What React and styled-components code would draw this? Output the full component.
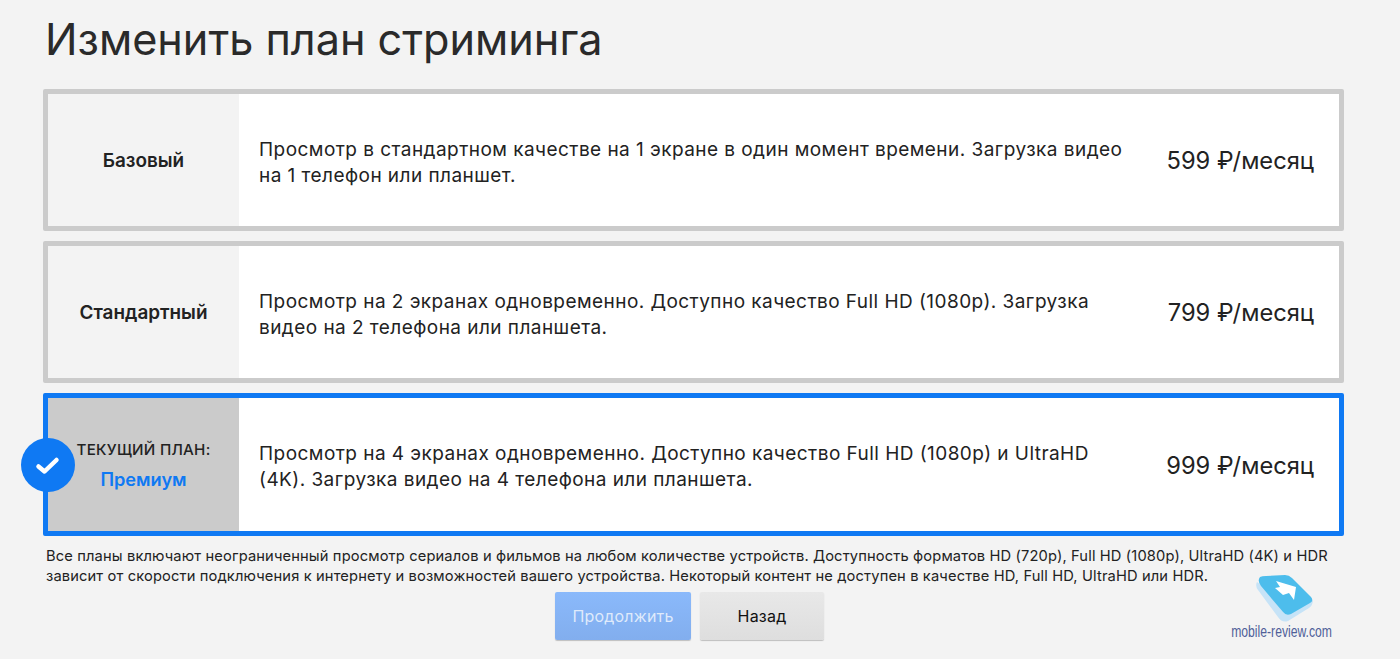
import React from "react";
import styled, { createGlobalStyle } from "styled-components";

const Global = createGlobalStyle`
  html, body { margin: 0; padding: 0; background: #f3f3f3; height: 100%; }
  body { font-family: "Inter", "Liberation Sans", sans-serif; color: #222; overflow: hidden; }
`;
const Page = styled.div`
  position: relative;
  width: 1400px;
  height: 659px;
  overflow: hidden;
  padding: 0 56px 0 43px;
  box-sizing: border-box;
`;
const Title = styled.h1`
  margin: 0;
  height: 89px;
  padding: 12px 0 0 2px;
  box-sizing: border-box;
  font-size: 43.2px;
  line-height: 54px;
  font-weight: 400;
  color: #2a2a2a;
`;
const Plans = styled.div`
  display: flex;
  flex-direction: column;
  gap: 10px;
`;
const Card = styled.div`
  position: relative;
  display: grid;
  grid-template-columns: 191px 1fr 182px;
  height: ${p => (p.$active ? 143 : 142)}px;
  box-sizing: border-box;
  border: 5px solid ${p => (p.$active ? "#0f79f3" : "#cbcbcb")};
  border-radius: 2px;
  background: #fff;
`;
const NameCell = styled.div`
  display: flex;
  flex-direction: column;
  align-items: center;
  justify-content: center;
  gap: 9px;
  padding-top: 1px;
  background: ${p => (p.$active ? "#cbcbcb" : "#f3f3f3")};
`;
const Name = styled.div`
  font-size: ${p => (p.$active ? 18.2 : 18.9)}px;
  font-weight: 600;
  color: ${p => (p.$active ? "#0f79f3" : "#222")};
`;
const Current = styled.div`
  font-size: 15.2px;
  font-weight: 500;
  color: #222;
  letter-spacing: 0.25px;
`;
const Desc = styled.div`
  align-self: center;
  padding: 5px 20px 0 20px;
  font-size: 19px;
  line-height: 26px;
  color: #222;
  letter-spacing: 0.45px;
`;
const Price = styled.div`
  align-self: center;
  justify-self: end;
  padding: 1px 25px 0 0;
  font-size: 23.7px;
  color: #222;
  white-space: nowrap;
`;
const Badge = styled.div`
  position: absolute;
  left: -27px;
  top: 40px;
  width: 54px;
  height: 54px;
  border-radius: 50%;
  background: #0f79f3;
  display: flex;
  align-items: center;
  justify-content: center;
`;
const Note = styled.p`
  margin: 0;
  padding: 10px 0 0 3px;
  font-size: 14.7px;
  line-height: 20px;
  color: #222;
  letter-spacing: 0.13px;
`;
const Actions = styled.div`
  display: flex;
  justify-content: center;
  gap: 9px;
  padding: 6px 8px 0 0;
`;
const Button = styled.div`
  width: ${p => p.$w}px;
  height: 48px;
  display: flex;
  align-items: center;
  justify-content: center;
  font-size: 16px;
  border-radius: 2px;
  box-shadow: 0 1px 1px rgba(0,0,0,.22);
  letter-spacing: 0.2px;
  ${p => p.$primary
    ? "background: linear-gradient(#8ab9fb,#82aeee); color: #dfeafb;"
    : "background: linear-gradient(#e8e8e8,#dedede); color: #111;"}
`;
const Mark = styled.div`
  position: absolute;
  left: 1217px;
  top: 575px;
  width: 130px;
  display: flex;
  flex-direction: column;
  align-items: center;
`;
const MarkIcon = styled.svg`
  width: 58px;
  height: 48px;
  margin-left: 5px;
`;
const MarkText = styled.div`
  margin-top: 0;
  font-family: "Liberation Sans", sans-serif;
  font-size: 15.6px;
  color: #4f5f99;
  white-space: nowrap;
  transform: scaleX(0.78);
`;

const plans = [
  { name: "Базовый", desc: "Просмотр в стандартном качестве на 1 экране в один момент времени. Загрузка видео на 1 телефон или планшет.", price: "599 ₽/месяц" },
  { name: "Стандартный", desc: "Просмотр на 2 экранах одновременно. Доступно качество Full HD (1080p). Загрузка видео на 2 телефона или планшета.", price: "799 ₽/месяц" },
  { name: "Премиум", active: true, desc: "Просмотр на 4 экранах одновременно. Доступно качество Full HD (1080p) и UltraHD (4K). Загрузка видео на 4 телефона или планшета.", price: "999 ₽/месяц" },
];

export default function App() {
  return (
    <Page>
      <Global />
      <Title>Изменить план стриминга</Title>
      <Plans>
        {plans.map(p => (
          <Card key={p.name} $active={p.active}>
            <NameCell $active={p.active}>
              {p.active && <Current>ТЕКУЩИЙ ПЛАН:</Current>}
              <Name $active={p.active}>{p.name}</Name>
            </NameCell>
            <Desc>{p.desc}</Desc>
            <Price>{p.price}</Price>
            {p.active && (
              <Badge>
                <svg width="26" height="22" viewBox="0 0 26 22">
                  <path d="M3.5 12.5 L9.5 17.5 L21.5 6" fill="none" stroke="#fff" strokeWidth="4.5" strokeLinecap="round" strokeLinejoin="round" />
                </svg>
              </Badge>
            )}
          </Card>
        ))}
      </Plans>
      <Note>
        Все планы включают неограниченный просмотр сериалов и фильмов на любом количестве устройств. Доступность форматов HD (720p), Full HD (1080p), UltraHD (4K) и HDR зависит от скорости подключения к интернету и возможностей вашего устройства. Некоторый контент не доступен в качестве HD, Full HD, UltraHD или HDR.
      </Note>
      <Actions>
        <Button $primary $w={136}>Продолжить</Button>
        <Button $w={124}>Назад</Button>
      </Actions>
      <Mark>
        <MarkIcon viewBox="0 0 58 48">
          <path d="M1 7 Q-1 11 2 15 L22 42 Q26 48 32 46 L53 33 Q57 30 57 25 L36 38 Q31 41 27 37 L5 10 Z" fill="#c6e3f7" />
          <path d="M4 2 Q6 1 10 1 L29 0 Q33 0 36 3 L55 22 Q58 26 54 28 L35 39 Q30 41 27 37 L5 11 Q1 6 4 2 Z" fill="#4dbdec" />
          <path d="M20 6 L40 12 L38 25 L33 18 L27 20 L19 13 L24 12 Z" fill="#fff" />
        </MarkIcon>
        <MarkText>mobile-review.com</MarkText>
      </Mark>
    </Page>
  );
}
